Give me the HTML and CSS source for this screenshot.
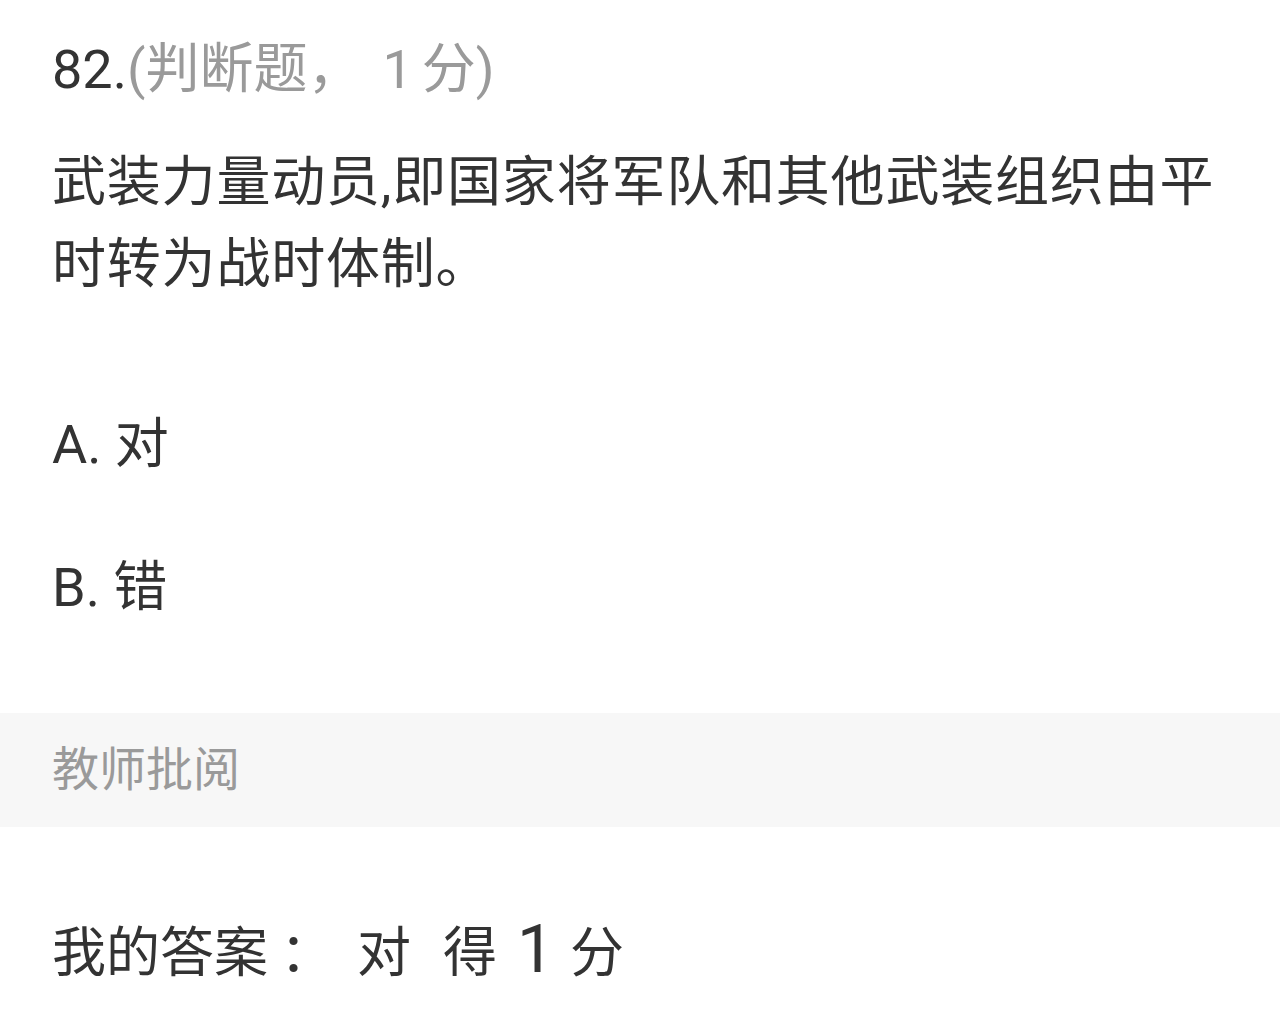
FILE: index.html
```html
<!DOCTYPE html>
<html lang="zh-CN">
<head>
<meta charset="utf-8">
<title>判断题</title>
<link rel="stylesheet" href="styles.css">
</head>
<body>
<div class="page">
  <div class="title"><span class="num">82.</span><span class="meta">(判断题，<span class="pts">1</span>分)</span></div>
  <div class="question">武装力量动员,即国家将军队和其他武装组织由平时转为战时体制。</div>
  <div class="option option-a">A. 对</div>
  <div class="option option-b">B. 错</div>
</div>
<div class="band">教师批阅</div>
<div class="answer"><span>我的答案</span><span class="colon">：</span><span class="ans">对</span><span class="got">得</span><span class="score">1</span><span class="unit">分</span></div>
</body>
</html>
```

FILE: styles.css
```css
html, body {
  margin: 0;
  padding: 0;
  background: #ffffff;
}
body {
  font-family: Roboto, "Noto Sans CJK SC", sans-serif;
  color: #333333;
  width: 1280px;
  overflow: hidden;
}
.page {
  padding: 30px 52px 0 52px;
}
.title {
  font-size: 54px;
  line-height: 80px;
  white-space: nowrap;
}
.num {
  color: #333333;
}
.meta {
  color: #9a9a9a;
}
.pts {
  margin-left: 21px;
  margin-right: 9px;
}
.question {
  margin-top: 32px;
  font-size: 54px;
  line-height: 82px;
  letter-spacing: 0.8px;
  width: 1176px;
}
.option {
  font-size: 54px;
  line-height: 82px;
}
.option-a {
  margin-top: 98px;
}
.option-b {
  margin-top: 61px;
}
.band {
  margin-top: 84px;
  height: 114px;
  background: #f7f7f7;
  color: #9a9a9a;
  font-size: 47px;
  line-height: 114px;
  padding-left: 52px;
}
.answer {
  margin-top: 82px;
  padding-left: 52px;
  font-size: 54px;
  line-height: 82px;
  white-space: nowrap;
}
.colon {
  margin-left: 12px;
}
.ans {
  margin-left: 23px;
}
.got {
  margin-left: 32px;
}
.score {
  font-size: 66px;
  margin-left: 20px;
}
.unit {
  margin-left: 16px;
}
```
